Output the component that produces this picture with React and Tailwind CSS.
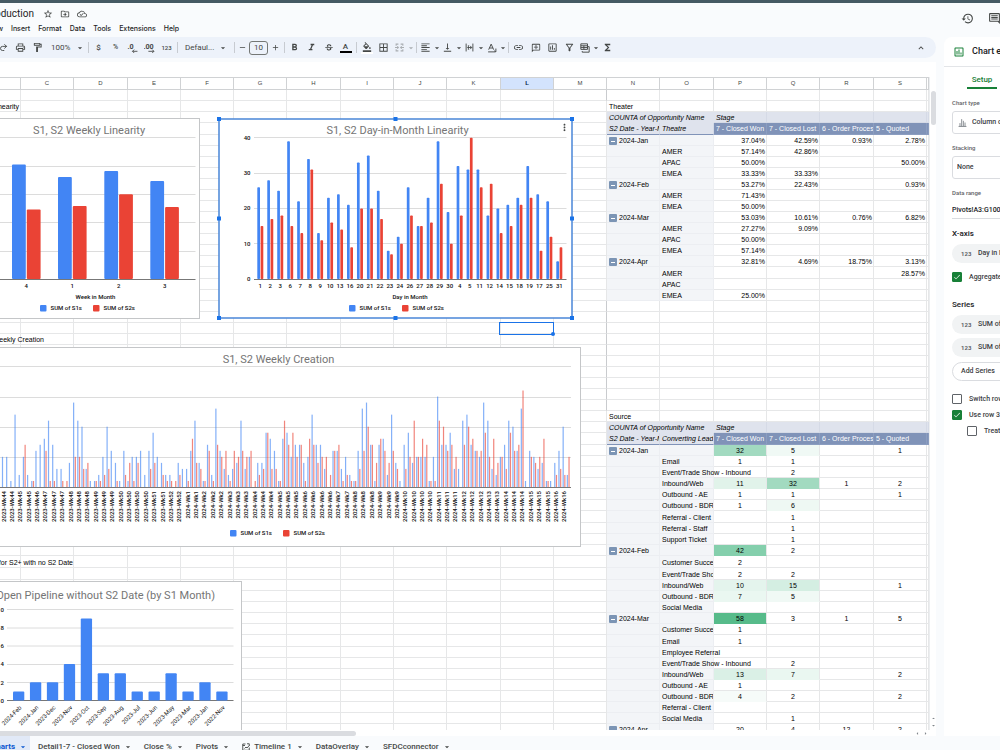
import React from "react";
import { Redo2 } from "lucide-react";
import {
  MdAdd, MdArrowDropDown, MdArrowDropUp, MdArrowLeft, MdArrowRight, MdBorderAll, MdCheck,
  MdFormatAlignLeft, MdFormatBold, MdFormatColorFill, MdFormatItalic, MdFunctions, MdHistory,
  MdKeyboardArrowUp, MdLink, MdMoreVert, MdOutlineAddComment, MdOutlineCloudDone, MdOutlineComment,
  MdOutlineDriveFileMove, MdOutlineFilterAlt, MdOutlineFormatPaint, MdOutlineInsertChart,
  MdOutlinePrint, MdRemove, MdStarOutline, MdStrikethroughS, MdVerticalAlignBottom,
} from "react-icons/md";

const BLUE = "#4285f4";
const RED = "#ea4335";

/* ---------- toolbar ---------- */

function Tool({ label, wide = "w-[17px]", children }) {
  return (
    <button type="button" aria-label={label} className={`flex h-4 shrink-0 items-center justify-center ${wide}`}>
      {children}
    </button>
  );
}

const Divider = () => <span className="mr-px ml-[2px] h-[11px] w-px shrink-0 bg-[#c7cbd1]" />;

function ToolMenu({ label, faded, children }) {
  return (
    <button type="button" aria-label={label} className={`flex h-4 shrink-0 items-center ${faded ? "opacity-40" : ""}`}>
      <span className="flex w-[15px] justify-center">{children}</span>
      <span className="flex w-[7px] justify-center"><MdArrowDropDown className="size-[10px] shrink-0" /></span>
    </button>
  );
}

function DecimalIcon({ more }) {
  return (
    <svg viewBox="0 0 20 18" className="h-[10px] w-[11px]" aria-hidden="true">
      <text x={more ? -1 : 1} y="11" className="font-[family-name:Roboto,sans-serif] text-[13px] font-bold" fill="#444746">
        {more ? ".00" : ".0"}
      </text>
      {more ? (
        <path d="M8 15h10M15 12l3 3-3 3" fill="none" stroke="#444746" strokeWidth="1.6" />
      ) : (
        <path d="M19 15H10M13 12l-3 3 3 3" fill="none" stroke="#444746" strokeWidth="1.6" />
      )}
    </svg>
  );
}

function Toolbar() {
  return (
    <div role="toolbar" aria-label="Formatting" className="flex h-[21px] shrink-0 items-center overflow-hidden rounded-r-full bg-[#edf2fa] text-[8px] text-[#444746]">
      <div className="-ml-[5px] flex items-center">
        <Tool label="Redo"><Redo2 className="size-[9px]" strokeWidth={2.4} /></Tool>
        <Tool label="Print"><MdOutlinePrint className="size-[11px]" /></Tool>
        <Tool label="Paint format"><MdOutlineFormatPaint className="size-[11px]" /></Tool>
        <label className="flex items-center">
          <select aria-label="Zoom" className="ml-[5px] w-6 appearance-none bg-transparent"><option>100%</option></select>
          <MdArrowDropDown className="mr-px size-[10px]" />
        </label>
        <Divider />
        <Tool label="Format as currency"><span className="font-medium">$</span></Tool>
        <Tool label="Format as percent"><span className="text-[7px] font-medium">%</span></Tool>
        <Tool label="Decrease decimal places"><DecimalIcon /></Tool>
        <Tool label="Increase decimal places"><DecimalIcon more /></Tool>
        <Tool label="More formats"><span className="text-[6px] font-medium">123</span></Tool>
        <Divider />
        <label className="flex items-center">
          <select aria-label="Font" className="ml-[6px] w-[33px] appearance-none bg-transparent"><option>Defaul...</option></select>
          <MdArrowDropDown className="mr-1 size-[10px]" />
        </label>
        <Divider />
        <Tool label="Decrease font size" wide="w-[13px]"><MdRemove className="size-[9px]" /></Tool>
        <input aria-label="Font size" defaultValue="10" className="h-[14px] w-[19px] rounded-[3px] border border-[#747775] bg-transparent text-center" />
        <Tool label="Increase font size" wide="w-[14px]"><MdAdd className="size-[9px]" /></Tool>
        <Divider />
        <Tool label="Bold"><MdFormatBold className="size-[11px]" /></Tool>
        <Tool label="Italic"><MdFormatItalic className="size-[11px]" /></Tool>
        <Tool label="Strikethrough"><MdStrikethroughS className="size-[10px]" /></Tool>
        <Tool label="Text color">
          <span className="flex w-3 flex-col items-center border-b-2 border-black text-[8px] leading-[9px] font-medium">A</span>
        </Tool>
        <Divider />
        <Tool label="Fill color">
          <span className="flex w-3 flex-col items-center border-b-2 border-white"><MdFormatColorFill className="size-[10px]" /></span>
        </Tool>
        <Tool label="Borders"><MdBorderAll className="size-[11px]" /></Tool>
        <ToolMenu label="Merge cells" faded>
          <svg viewBox="0 0 16 16" className="size-[9px]" fill="none" stroke="#444746" strokeWidth="1.8">
            <path d="M6 2H2v3M2 11v3h4M10 2h4v3M14 11v3h-4M0 8h6M4 6l2 2-2 2M16 8h-6M12 6l-2 2 2 2" />
          </svg>
        </ToolMenu>
        <Divider />
        <ToolMenu label="Horizontal align"><MdFormatAlignLeft className="size-[11px]" /></ToolMenu>
        <ToolMenu label="Vertical align"><MdVerticalAlignBottom className="size-[11px]" /></ToolMenu>
        <ToolMenu label="Text wrapping">
          <svg viewBox="0 0 16 16" className="size-[9px]" fill="none" stroke="#444746" strokeWidth="1.6">
            <path d="M2 1v14M14 1v14M4 8h8M9 5l3 3-3 3M6 4v8" />
          </svg>
        </ToolMenu>
        <ToolMenu label="Text rotation">
          <svg viewBox="0 0 18 18" className="size-[10px]" fill="none" stroke="#444746" strokeWidth="1.7">
            <path d="M3 12L7.500 2 12 12M4.500 9h6M2 16h13M16 10v6M13 14l3 2" />
          </svg>
        </ToolMenu>
        <Divider />
        <Tool label="Insert link"><MdLink className="size-[11px]" /></Tool>
        <Tool label="Insert comment"><MdOutlineAddComment className="size-[10px] -scale-x-100" /></Tool>
        <Tool label="Insert chart"><MdOutlineInsertChart className="size-[11px]" /></Tool>
        <Tool label="Create a filter" wide="w-4"><MdOutlineFilterAlt className="size-[11px]" /></Tool>
        <ToolMenu label="Filter views">
          <svg viewBox="0 0 18 18" className="size-[10px]" fill="none" stroke="#444746" strokeWidth="1.7">
            <path d="M1.500 1.500h12v10h-12zM1.500 5h12M1.500 8.200h12M7 5v6.500M4 14.500v2h12.500v-10h-2" />
          </svg>
        </ToolMenu>
        <Tool label="Functions"><MdFunctions className="size-[11px]" /></Tool>
      </div>
      <div className="ml-auto pr-[7px]">
        <Tool label="Hide the menus"><MdKeyboardArrowUp className="size-[10px]" /></Tool>
      </div>
    </div>
  );
}

/* ---------- header ---------- */

const MENUS = ["Insert", "Format", "Data", "Tools", "Extensions", "Help"];

function Header() {
  return (
    <header className="flex h-[34px] shrink-0 justify-between text-[#1f1f1f]">
      <div className="pt-[5px]">
        <div className="flex h-3 items-center gap-[7px] text-[#444746]">
          <h1 className="flex w-[34px] justify-end text-[10px] leading-3 text-[#1f1f1f]">Production</h1>
          <button type="button" aria-label="Star" className="ml-[2px]"><MdStarOutline className="size-[10px]" /></button>
          <button type="button" aria-label="Move"><MdOutlineDriveFileMove className="size-[10px]" /></button>
          <button type="button" aria-label="Document status"><MdOutlineCloudDone className="size-[10px]" /></button>
        </div>
        <nav className="mt-1 flex h-[11px] items-center font-[family-name:Inter,sans-serif] text-[7px] font-medium">
          <button type="button" className="flex w-[7px] justify-end pr-1">View</button>
          {MENUS.map((m) => (
            <button type="button" key={m} className="px-1">{m}</button>
          ))}
        </nav>
      </div>
      <div className="flex w-[39px] shrink-0 items-center gap-[14px] overflow-hidden pb-[3px] text-[#444746]">
        <button type="button" aria-label="Version history" className="shrink-0"><MdHistory className="size-[13px]" /></button>
        <button type="button" aria-label="Comments" className="shrink-0"><MdOutlineComment className="size-[13px]" /></button>
      </div>
    </header>
  );
}

/* ---------- grid ---------- */

const COLUMNS = [
  ["B", "w-[21px]"], ["C", "w-[53px]"], ["D", "w-[54px]"], ["E", "w-[53px]"], ["F", "w-[53px]"], ["G", "w-[53px]"],
  ["H", "w-[54px]"], ["I", "w-[53px]"], ["J", "w-[53px]"], ["K", "w-[54px]"], ["L", "w-[53px]"], ["M", "w-[53px]"],
  ["N", "w-[53px]"], ["O", "w-[54px]"], ["P", "w-[53px]"], ["Q", "w-[53px]"], ["R", "w-[54px]"], ["S", "w-[53px]"], ["T", ""],
];

const blank = { kind: "blank" };
const pivotHead = (second) => [
  { kind: "name", cells: ["COUNTA of Opportunity Name", "", "Stage"] },
  { kind: "head", tall: true, cells: ["S2 Date - Year-Month", second, "7 - Closed Won", "7 - Closed Lost", "6 - Order Processing", "5 - Quoted", "4 - "] },
];
const pct = (...cells) => ({ kind: "pct", cells });
const num = (fills, ...cells) => ({ kind: "num", cells, fills });
const tall = (row) => ({ ...row, tall: true });

const G = {
  58: "bg-[#57bb8a]", 42: "bg-[#84cfac]", 32: "bg-[#a2dac0]", 15: "bg-[#d4eee2]", 13: "bg-[#daf0e6]",
  11: "bg-[#e1f3ea]", 10: "bg-[#e4f4ed]", 7: "bg-[#eaf7f1]", 6: "bg-[#eef8f3]", 5: "bg-[#f0f9f5]", 4: "bg-[#f6fbf9]",
};

const ROWS = [
  blank,
  { kind: "title", lead: ["Weekly Linearity", "w-[19px]"], cells: ["Theater"] },
  ...pivotHead("Theatre"),
  pct("2024-Jan", "", "37.04%", "42.59%", "0.93%", "2.78%"),
  pct("", "AMER", "57.14%", "42.86%"),
  pct("", "APAC", "50.00%", "", "", "50.00%"),
  pct("", "EMEA", "33.33%", "33.33%"),
  pct("2024-Feb", "", "53.27%", "22.43%", "", "0.93%"),
  pct("", "AMER", "71.43%"),
  pct("", "EMEA", "50.00%"),
  pct("2024-Mar", "", "53.03%", "10.61%", "0.76%", "6.82%"),
  pct("", "AMER", "27.27%", "9.09%"),
  pct("", "APAC", "50.00%"),
  pct("", "EMEA", "57.14%"),
  pct("2024-Apr", "", "32.81%", "4.69%", "18.75%", "3.13%"),
  tall(pct("", "AMER", "", "", "", "28.57%")),
  pct("", "APAC"),
  pct("", "EMEA", "25.00%"),
  blank, blank, blank,
  { kind: "blank", lead: ["Weekly Creation", "w-[44px]"] },
  blank, blank, blank, blank, blank, blank,
  { kind: "title", cells: ["Source"] },
  ...pivotHead("Converting Lead Source"),
  num([G[32], G[5]], "2024-Jan", "", "32", "5", "", "1"),
  num([], "", "Email", "1", "1"),
  num([], "", "Event/Trade Show - Inbound", "", "2"),
  num([G[11], G[32]], "", "Inbound/Web", "11", "32", "1", "2"),
  num([], "", "Outbound - AE", "1", "1", "", "1"),
  num(["", G[6]], "", "Outbound - BDR", "1", "6"),
  tall(num([], "", "Referral - Client", "", "1")),
  num([], "", "Referral - Staff", "", "1"),
  num([], "", "Support Ticket", "", "1"),
  num([G[42]], "2024-Feb", "", "42", "2"),
  { ...tall(num([], "", "Customer Success", "2")), lead: ["for S2+ with no S2 Date", "w-[73px]"] },
  tall(num([], "", "Event/Trade Show - Inbound", "2", "2")),
  num([G[10], G[15]], "", "Inbound/Web", "10", "15", "", "1"),
  num([G[7], G[5]], "", "Outbound - BDR", "7", "5"),
  num([], "", "Social Media"),
  num([G[58]], "2024-Mar", "", "58", "3", "1", "5"),
  num([], "", "Customer Success", "1"),
  tall(num([], "", "Email", "1")),
  num([], "", "Employee Referral"),
  num([], "", "Event/Trade Show - Inbound", "", "2"),
  num([G[13], G[7]], "", "Inbound/Web", "13", "7", "", "2"),
  num([], "", "Outbound - AE", "1"),
  num([G[4]], "", "Outbound - BDR", "4", "2", "", "2"),
  num([], "", "Referral - Client"),
  num([], "", "Social Media", "", "1"),
  num([], "2024-Apr", "", "20", "4", "12", "2"),
];

const FIRST = 12; // index of column N, where both pivot tables begin

function cellStyle(row, i) {
  const k = i - FIRST;
  const line = "border-[#e6e7e8]";
  if (k < 0) return row.kind === "blank" && i === FIRST - 1 ? "border-r-[#c9cbce] border-b-[#e6e7e8]" : line;
  if (row.kind === "name") return k < 2 ? "border-[#dfe3ed] bg-[#dfe3ed] italic" : "border-[#d5dae6] bg-[#dfe3ed] italic";
  if (row.kind === "head") {
    return k < 2 ? "border-r-[#d3d9e6] border-b-[#8093b8] bg-[#dfe3ed] italic" : "border-[#8b9dc0] bg-[#8093b8] text-white";
  }
  if (row.kind === "pct" || row.kind === "num") {
    if (k < 2) return "border-[#eceef2] bg-[#f3f5f8]";
    const fill = row.fills && row.fills[k - 2];
    if (fill) return `border-r-[#e6e7e8] border-b-transparent ${fill}`;
  }
  return line;
}

function Cell({ row, i }) {
  const k = i - FIRST;
  let text = "";
  if (i === 0 && row.lead) {
    return (
      <td className="border-r border-b border-[#e6e7e8] p-0">
        <div className={`flex h-[10px] justify-end leading-[12px] whitespace-nowrap ${row.lead[1]}`}>{row.lead[0]}</div>
      </td>
    );
  }
  if (k >= 0 && row.cells) text = row.cells[k] || "";
  const next = row.cells && row.cells[k + 1];
  let place = "pl-[2px]";
  if (k >= 2 && row.kind === "pct") place = "pr-px text-right";
  if (k >= 2 && row.kind === "num") place = "text-center";
  return (
    <td className={`border-r border-b p-0 ${cellStyle(row, i)}`}>
      {text && (
        <div className={`h-[10px] whitespace-nowrap ${row.kind === "head" ? "leading-[10px]" : "leading-[12px]"} ${place} ${next ? "overflow-hidden" : ""}`}>
          {k === 0 && text.startsWith("2024") ? (
            <span className="flex items-center gap-[2px]">
              <button type="button" aria-label={`Collapse ${text}`} className="flex size-[8px] items-center justify-center rounded-[1px] bg-[#7c95b5]">
                <span className="h-px w-1 bg-white" />
              </button>
              {text}
            </span>
          ) : text}
        </div>
      )}
    </td>
  );
}

function Grid() {
  return (
    <table className="w-full table-fixed border-separate border-spacing-0 font-[family-name:'Liberation_Sans',Arial,sans-serif] text-[7px] text-black">
      <colgroup>{COLUMNS.map(([n, w]) => <col key={n} className={w} />)}</colgroup>
      <thead>
        <tr className="h-[13px]">
          {COLUMNS.map(([n]) => (
            <th key={n} scope="col" className={`border-y border-r border-y-[#d0d2d4] border-r-[#d0d2d4] p-0 text-center text-[6px] leading-[11px] ${n === "L" ? "bg-[#d3e3fd] font-bold text-[#041e49]" : "font-normal text-[#444746]"}`}>
              {n === "B" || n === "T" ? "" : n}
            </th>
          ))}
        </tr>
      </thead>
      <tbody>
        {ROWS.map((row, r) => (
          <tr key={r} className={row.tall ? "h-[12px]" : "h-[11px]"}>
            {COLUMNS.map(([n], i) => <Cell key={n} row={row} i={i} />)}
          </tr>
        ))}
      </tbody>
    </table>
  );
}

/* ---------- charts (drawn in sheet coordinates) ---------- */

const TITLE = "text-[11px] fill-[#757575]";
const TICK = "text-[6px] fill-[#111111] font-medium";
const LABEL = "text-[6px] fill-[#111111] font-medium";

function Legend({ x, y }) {
  return (
    <g>
      <rect x={x} y={y - 3} width="6.500" height="6.500" rx="1" fill={BLUE} />
      <text x={x + 10.5} y={y + 2} className={LABEL}>SUM of S1s</text>
      <rect x={x + 53} y={y - 3} width="6.500" height="6.500" rx="1" fill={RED} />
      <text x={x + 63.5} y={y + 2} className={LABEL}>SUM of S2s</text>
    </g>
  );
}

function Lines({ x1, x2, ys, base }) {
  return (
    <g>
      {ys.map((y) => <path key={y} d={`M${x1} ${y}H${x2}`} stroke="#dcdcdc" strokeWidth="1" />)}
      <path d={`M${x1} ${base}H${x2}`} stroke="#777777" strokeWidth="1" />
    </g>
  );
}

function Frame({ x, y, w, h }) {
  return <rect x={x} y={y} width={w} height={h} fill="#fff" stroke="#c4c6c8" />;
}

const WEEKLY = [[12, 164.5, 209.5, "4"], [58, 177, 206, "1"], [104.300, 171, 194.300, "2"], [150.300, 181, 207, "3"]];

function WeeklyLinearity() {
  return (
    <svg viewBox="0 118 200 201" role="img" aria-label="S1, S2 Weekly Linearity" className="h-[201px] w-[200px]">
      <Frame x={-5} y={118.5} w={204.5} h={200} />
      <text x="89" y="133.500" textAnchor="middle" className={TITLE}>S1, S2 Weekly Linearity</text>
      <Lines x1={0} x2={195.5} ys={[137.5, 166.5, 194.5, 222.5, 251.5]} base={279.5} />
      {WEEKLY.map(([x, b, r, name]) => (
        <g key={name}>
          <rect x={x} y={b} width="13.800" height={279 - b} rx="1" fill={BLUE} />
          <rect x={x + 14.8} y={r} width="13.800" height={279 - r} rx="1" fill={RED} />
          <text x={x + 14.3} y="287.500" textAnchor="middle" className={TICK}>{name}</text>
        </g>
      ))}
      <text x="95.500" y="299" textAnchor="middle" className={LABEL}>Week in Month</text>
      <Legend x={40} y={308} />
    </svg>
  );
}

const DAYS = [1, 2, 3, 6, 7, 8, 9, 10, 13, 16, 20, 21, 22, 23, 24, 26, 27, 28, 29, 30, 4, 5, 11, 12, 14, 15, 18, 19, 17, 25, 31];
const DAY_S1 = [26, 28, 25, 39, 22, 34, 13, 23, 24, 21, 33, 35, 25, 8, 12, 26, 15, 23, 39, 19, 32, 31, 31, 18, 20, 21, 23, 32, 24, 22, 5];
const DAY_S2 = [15, 17, 18, 15, 13, 31, 11, 16, 14, 9, 20, 20, 17, 7, 10, 18, 15, 16, 27, 10, 18, 40, 26, 27, 13, 15, 21, 23, 8, 12, 9];

function DayLinearity() {
  const handles = [[219, 119], [395.5, 119], [572, 119], [219, 218.5], [572, 218.5], [219, 318], [395.5, 318], [572, 318]];
  return (
    <svg viewBox="216 116 359 205" role="img" aria-label="S1, S2 Day-in-Month Linearity" className="h-[205px] w-[359px]">
      <rect x="219" y="119" width="353" height="199" fill="#fff" stroke="#4a86d8" strokeWidth="1.500" />
      <text x="397.500" y="133.500" textAnchor="middle" className={TITLE}>S1, S2 Day-in-Month Linearity</text>
      <Lines x1={254} x2={566.5} ys={[137.5, 173.5, 208.5, 243.5]} base={279.5} />
      {[40, 30, 20, 10, 0].map((v) => (
        <text key={v} x="250.500" y={281 - v * 3.53} textAnchor="end" className={LABEL}>{v}</text>
      ))}
      {DAYS.map((d, i) => {
        const c = 260.3 + i * 9.967;
        return (
          <g key={d}>
            <rect x={c - 3} y={279 - DAY_S1[i] * 3.53} width="2.700" height={DAY_S1[i] * 3.53} rx="0.800" fill={BLUE} />
            <rect x={c + 0.3} y={279 - DAY_S2[i] * 3.53} width="2.700" height={DAY_S2[i] * 3.53} rx="0.800" fill={RED} />
            <text x={c} y="287.500" textAnchor="middle" className={TICK}>{d}</text>
          </g>
        );
      })}
      <text x="410" y="299" textAnchor="middle" className={LABEL}>Day in Month</text>
      <Legend x={349} y={308} />
      {handles.map(([x, y]) => <rect key={`${x}-${y}`} x={x - 2} y={y - 2} width="4" height="4" fill="#1a73e8" />)}
    </svg>
  );
}

const WK_S1 = [
  5, 5, 1, 12, 2, 5, 2, 1, 6, 7, 8, 11, 7, 3, 3, 0, 4, 14, 11, 10, 3, 1, 1, 2, 5, 10, 6, 4, 1, 6, 1, 5, 5, 6, 2, 6, 9, 5, 4, 2,
  2, 0, 4, 3, 3, 6, 11, 4, 1, 7, 2, 13, 6, 3, 2, 3, 4, 11, 3, 5, 0, 4, 4, 9, 8, 6, 1, 8, 9, 5, 7, 7, 4, 5, 12, 7, 7, 3, 0, 6,
  6, 3, 5, 2, 1, 6, 13, 14, 7, 1, 7, 8, 2, 12, 4, 1, 7, 9, 4, 5, 5, 5, 1, 5, 15, 7, 7, 9, 3, 3, 11, 12, 7, 6, 5, 14, 11, 3, 2, 5,
  7, 11, 10, 6, 13, 1, 6, 5, 3, 4, 1, 1, 4, 6, 10, 2,
];
const WK_S2 = [
  0, 0, 0, 0, 0, 7, 0, 1, 0, 0, 6, 1, 1, 0, 1, 1, 0, 5, 5, 3, 4, 0, 1, 1, 2, 3, 0, 1, 0, 2, 4, 1, 4, 0, 0, 3, 4, 0, 2, 1,
  1, 1, 2, 0, 1, 8, 4, 3, 1, 6, 1, 7, 5, 6, 1, 6, 5, 6, 5, 6, 1, 2, 3, 9, 3, 3, 1, 11, 7, 9, 5, 7, 1, 8, 7, 4, 5, 5, 2, 6,
  7, 1, 2, 1, 1, 3, 6, 10, 7, 4, 8, 6, 4, 6, 3, 0, 3, 5, 11, 5, 8, 7, 1, 1, 11, 10, 6, 7, 5, 0, 7, 10, 8, 6, 6, 9, 5, 8, 4, 5,
  3, 9, 6, 7, 16, 0, 5, 4, 5, 8, 1, 0, 2, 3, 2, 5,
];
const WEEKS_2023 = [44, 44, 45, 45, 46, 47, 47, 47, 48, 48, 48, 49, 49, 49, 50, 50, 50, 50, 51, 51, 52, 52];
const WEEKS_2024 = [
  1, 1, 2, 2, 2, 3, 3, 3, 4, 4, 4, 5, 5, 5, 6, 6, 6, 6, 7, 7, 8, 8, 8, 9, 9, 9, 10, 10, 10, 10, 11, 11, 11,
  12, 12, 12, 13, 13, 14, 14, 14, 15, 15, 15, 16, 16,
];
const WEEK_NAMES = [...WEEKS_2023.map((w) => `2023-Wk${w}`), ...WEEKS_2024.map((w) => `2024-Wk${w}`)];

function WeeklyCreation() {
  const u = 6.03;
  return (
    <svg viewBox="0 347 582 200" role="img" aria-label="S1, S2 Weekly Creation" className="h-[200px] w-[582px]">
      <Frame x={-5} y={347.5} w={585.5} h={199} />
      <text x="278.500" y="362.500" textAnchor="middle" className={TITLE}>S1, S2 Weekly Creation</text>
      <Lines x1={0} x2={571} ys={[366.5, 397.5, 427.5, 457.5]} base={487.5} />
      {WK_S1.map((v, i) => {
        const c = 3.4 + i * 4.184;
        return (
          <g key={i}>
            <rect x={c - 1.5} y={487 - v * u} width="1.200" height={v * u} fill={BLUE} fillOpacity="0.650" />
            <rect x={c + 0.2} y={487 - WK_S2[i] * u} width="1.200" height={WK_S2[i] * u} fill={RED} fillOpacity="0.650" />
          </g>
        );
      })}
      {WEEK_NAMES.map((name, i) => {
        const x = 5.6 + i * 8.368;
        return <text key={i} x={x} y="491" transform={`rotate(-90 ${x} 491)`} textAnchor="end" className={TICK}>{name}</text>;
      })}
      <Legend x={230} y={533} />
    </svg>
  );
}

const PIPELINE = [
  ["2024-Feb", 1], ["2024-Jan", 2], ["2023-Dec", 2], ["2023-Nov", 4], ["2023-Oct", 9], ["2023-Sep", 3], ["2023-Aug", 3],
  ["2023-Jul", 1], ["2023-Jun", 1], ["2023-May", 3], ["2023-Mar", 1], ["2023-Jan", 2], ["2022-Nov", 1],
];

function OpenPipeline() {
  return (
    <svg viewBox="0 581 243 160" role="img" aria-label="Open Pipeline without S2 Date (by S1 Month)" className="h-[160px] w-[243px]">
      <Frame x={-5} y={581.5} w={246.5} h={170} />
      <text x="215" y="599" textAnchor="end" className={TITLE}>Open Pipeline without S2 Date (by S1 Month)</text>
      <Lines x1={7} x2={233.5} ys={[609.5, 628, 646, 664.5, 682.5]} base={700.5} />
      {[10, 8, 6, 4, 2, 0].map((v) => (
        <text key={v} x="3.800" y={702.8 - v * 9.12} textAnchor="end" className={LABEL}>{v}</text>
      ))}
      {PIPELINE.map(([name, v], i) => {
        const x = 13 + i * 16.94;
        return (
          <g key={name}>
            <rect x={x} y={700.5 - v * 9.12} width="11.300" height={v * 9.12} rx="1" fill={BLUE} />
            <text x={x + 9} y="708" transform={`rotate(-45 ${x + 9} 708)`} textAnchor="end" className="fill-[#222222] text-[6px]">{name}</text>
          </g>
        );
      })}
    </svg>
  );
}

function Sheet() {
  return (
    <section className="mt-1 flex min-h-0 flex-1 flex-col bg-white">
      <div className="h-[15px] shrink-0" />
      <div className="flex min-h-0 flex-1">
        <div className="relative min-w-0 flex-1 overflow-hidden">
          <Grid />
          <div className="absolute top-[41px] left-0"><WeeklyLinearity /></div>
          <div className="absolute top-[39px] left-[216px]">
            <DayLinearity />
            <button type="button" aria-label="Chart options" className="absolute top-[6px] right-[5px] text-[#444746]">
              <MdMoreVert className="size-[11px]" />
            </button>
          </div>
          <div className="absolute top-[270px] left-0"><WeeklyCreation /></div>
          <div className="absolute top-[504px] left-0"><OpenPipeline /></div>
          <div className="absolute top-[245px] left-[499px] h-[13px] w-[55px] border border-[#1a73e8]">
            <span className="absolute -right-[2px] -bottom-[2px] size-1 rounded-full bg-[#1a73e8]" />
          </div>
        </div>
        <div className="flex w-[7px] shrink-0 flex-col items-center border-l border-[#eceef0] text-[#80868b]">
          <span className="mt-[14px] h-[34px] w-[5px] rounded-full bg-[#dadce0]" />
          <MdArrowDropUp className="mt-auto size-[7px]" />
          <MdArrowDropDown className="mb-px size-[7px]" />
        </div>
      </div>
      <div className="flex h-[6px] shrink-0 items-center justify-between text-[#80868b]">
        <span className="h-[5px] w-[38%] rounded-r-full bg-[#dadce0]" />
        <span className="mr-[7px] flex gap-px"><MdArrowLeft className="size-[7px]" /><MdArrowRight className="size-[7px]" /></span>
      </div>
    </section>
  );
}

/* ---------- chart editor ---------- */

function Check({ id, on, children }) {
  return (
    <label htmlFor={id} className="flex h-4 items-center gap-[7px] whitespace-nowrap">
      <span className="grid place-items-center *:[grid-area:1/1]">
        <input id={id} type="checkbox" defaultChecked={on} className="size-[10px] appearance-none rounded-[1px] border border-[#5f6368] checked:border-[#188038] checked:bg-[#188038]" />
        {on && <MdCheck className="pointer-events-none size-[8px] text-white" />}
      </span>
      {children}
    </label>
  );
}

function Pill({ children }) {
  return (
    <button type="button" className="flex h-[19px] shrink-0 items-center rounded-full bg-[#f1f3f4] pl-[9px] whitespace-nowrap">
      <span className="w-[17px] text-left text-[6px] font-bold text-[#5f6368]">123</span>
      {children}
    </button>
  );
}

const FIELD = "mt-[6px] flex h-[14px] items-center text-[6px] text-[#5f6368]";
const GROUP = "flex h-[14px] items-center text-[8px] font-medium text-[#202124]";

function ChartEditor() {
  return (
    <aside aria-label="Chart editor" className="ml-2 w-14 shrink-0 overflow-hidden rounded-tl-lg bg-white text-[7px] font-medium text-[#3c4043]">
      <div className="w-[150px]">
        <div className="flex h-[30px] items-center gap-2 border-b border-[#e3e5e8] pl-[9px] text-[9px] text-[#202124]">
          <MdOutlineInsertChart className="size-[12px] text-[#188038]" />
          <h2 className="-ml-px">Chart editor</h2>
        </div>
        <div className="flex h-[22px] pl-[23px]" role="tablist">
          <button type="button" role="tab" aria-selected="true" className="w-[30px] border-b-2 border-[#188038] pt-[5px] text-[8px] text-[#188038]">Setup</button>
        </div>
        <div className="flex flex-col px-2">
          <label htmlFor="type" className={FIELD}>Chart type</label>
          <div className="mt-[2px] flex h-[23px] items-center gap-[5px] rounded-[3px] border border-[#dadce0] pl-[5px]">
            <svg viewBox="0 0 16 16" className="size-[9px]" fill="none" stroke="#80868b" strokeWidth="1.600" aria-hidden="true">
              <path d="M1 15h14M3.500 15V9M6.500 15V2M9.500 15V5M12.500 15V8" />
            </svg>
            <select id="type" className="flex-1 appearance-none bg-transparent"><option>Column chart</option></select>
          </div>
          <label htmlFor="stacking" className={FIELD}>Stacking</label>
          <select id="stacking" className="mt-[2px] h-[23px] appearance-none rounded-[3px] border border-[#dadce0] pl-1"><option>None</option></select>
          <label htmlFor="range" className={FIELD}>Data range</label>
          <input id="range" defaultValue="Pivots!A3:G1000" className="mt-[2px] h-[18px] border-b border-[#dadce0] text-[#202124]" />
          <h3 className={`mt-2 ${GROUP}`}>X-axis</h3>
          <div className="mt-[3px] flex flex-col"><Pill>Day in Month</Pill></div>
          <div className="mt-[6px]"><Check id="aggregate" on>Aggregate</Check></div>
          <h3 className={`mt-[13px] ${GROUP}`}>Series</h3>
          <div className="mt-[3px] flex flex-col gap-1">
            <Pill>SUM of S1s</Pill>
            <Pill>SUM of S2s</Pill>
            <button type="button" className="mt-px h-[19px] rounded-full border border-[#dadce0] pl-2 text-left">Add Series</button>
          </div>
          <div className="mt-[10px]">
            <Check id="switch">Switch rows / columns</Check>
            <Check id="headers" on>Use row 3 as headers</Check>
            <div className="pl-[15px]"><Check id="treat">Treat labels as text</Check></div>
          </div>
        </div>
      </div>
    </aside>
  );
}

/* ---------- sheet tabs ---------- */

const TABS = ["Detail1-7 - Closed Won", "Close %", "Pivots", "Timeline 1", "DataOverlay", "SFDCconnector"];

function SheetTabs() {
  return (
    <nav aria-label="Sheets" className="h-[14px] shrink-0 overflow-hidden bg-[#f9fbfd] text-[8px] font-medium text-[#444746]">
      <div className="flex h-[22px]">
        <button type="button" className="flex w-[30px] shrink-0 items-center justify-end gap-[3px] bg-[#e1e9f7] pr-[2px] font-bold text-[#0b57d0]">
          Charts<MdArrowDropDown className="size-[10px] shrink-0" />
        </button>
        {TABS.map((t) => (
          <button type="button" key={t} className="flex shrink-0 items-center gap-[3px] pr-[3px] pl-[8px] whitespace-nowrap">
            {t === "Timeline 1" && (
              <svg viewBox="0 0 16 16" className="mr-px size-[8px]" fill="none" stroke="#444746" strokeWidth="1.800" aria-hidden="true">
                <path d="M7 2H1.500v12.500h13V9M1.500 5H6M5 11l3-3 2 2 4.500-5M10 1.500h4.500V6" />
              </svg>
            )}
            {t}<MdArrowDropDown className="size-[10px] shrink-0" />
          </button>
        ))}
      </div>
    </nav>
  );
}

export default function App() {
  return (
    <div className="flex h-screen flex-col overflow-hidden bg-[#f9fbfd] font-[family-name:Roboto,sans-serif]">
      <div className="h-[3px] shrink-0 bg-[#455a64]" />
      <Header />
      <main className="flex min-h-0 flex-1">
        <div className="flex min-w-0 flex-1 flex-col">
          <Toolbar />
          <Sheet />
        </div>
        <ChartEditor />
      </main>
      <SheetTabs />
    </div>
  );
}
